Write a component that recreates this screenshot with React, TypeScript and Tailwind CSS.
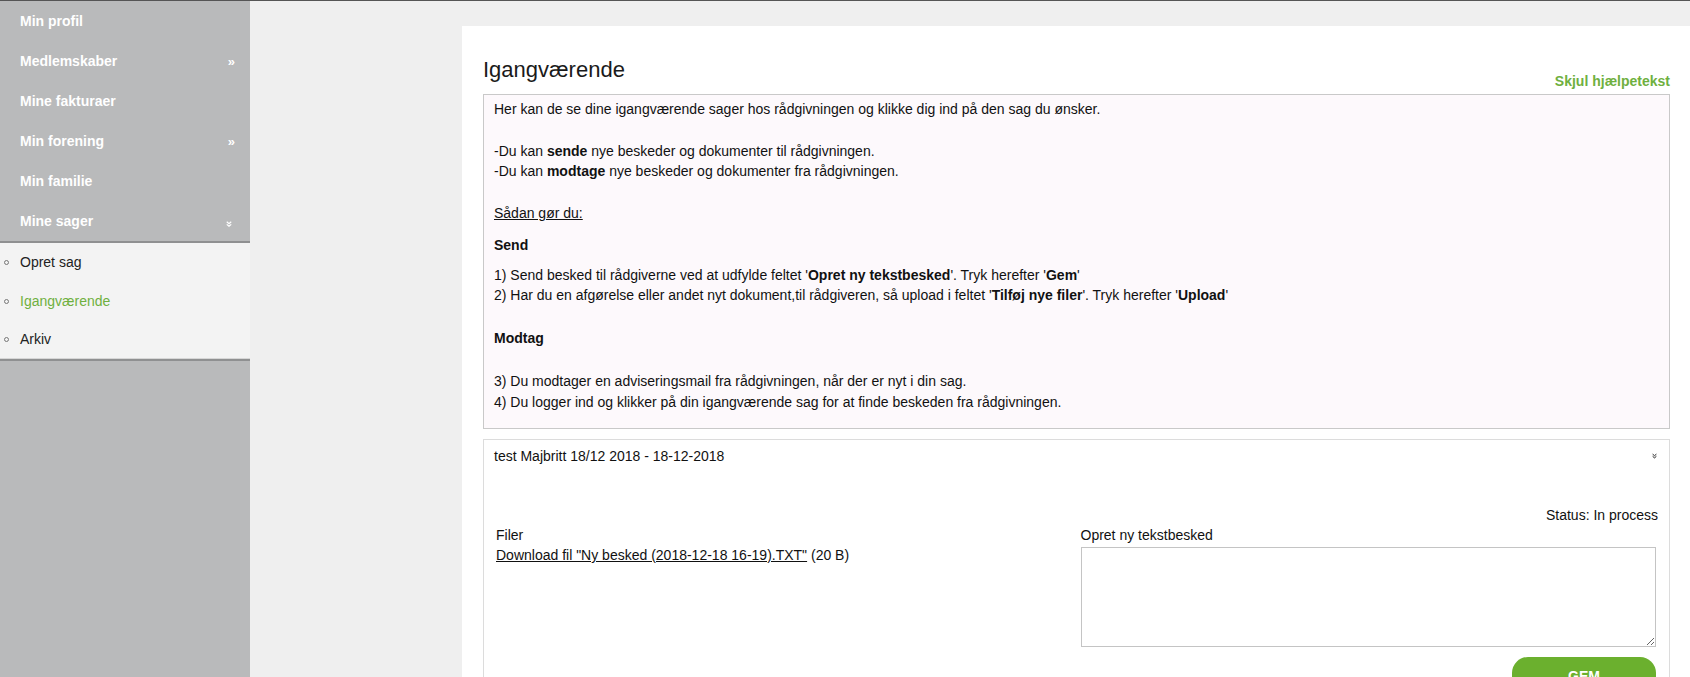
import React, { useState } from 'react';

const mainMenu = [
  { label: 'Min profil', arrow: false },
  { label: 'Medlemskaber', arrow: true },
  { label: 'Mine fakturaer', arrow: false },
  { label: 'Min forening', arrow: true },
  { label: 'Min familie', arrow: false },
];

const subMenu = [
  { label: 'Opret sag', active: false },
  { label: 'Igangværende', active: true },
  { label: 'Arkiv', active: false },
];

const DoubleDown: React.FC<{ className?: string }> = ({ className }) => (
  <svg viewBox="0 0 8 8" className={className} fill="none" stroke="currentColor" strokeWidth="1.6">
    <path d="M1 1l3 2.5L7 1" />
    <path d="M1 4.5L4 7l3-2.5" />
  </svg>
);

const Sidebar: React.FC = () => (
  <aside className="w-[250px] shrink-0 bg-[#b9babb]">
    <ul>
      {mainMenu.map((item) => (
        <li key={item.label} className="h-10 flex items-center justify-between pl-5 pr-[15px]">
          <span className="text-white font-bold text-[14px]">{item.label}</span>
          {item.arrow && <span className="text-white font-bold text-[13px] leading-none">»</span>}
        </li>
      ))}
      <li className="h-10 flex items-center justify-between pl-5 pr-[18px]">
        <span className="text-white font-bold text-[14px]">Mine sager</span>
        <DoubleDown className="w-[6px] h-[6px] text-white mt-[5px]" />
      </li>
    </ul>
    <div className="h-[2px] bg-[#8f9091]" />
    <ul className="bg-[#f3f3f3]">
      {subMenu.map((item, i) => (
        <li key={item.label} className={`flex items-center ${i === subMenu.length - 1 ? 'h-[37px]' : 'h-[39px]'}`}>
          <span className="w-[5px] h-[5px] rounded-full border border-[#777] ml-1 mr-[11px]" />
          <span className={`text-[14px] ${item.active ? 'text-[#6fb03f]' : 'text-[#222]'}`}>
            {item.label}
          </span>
        </li>
      ))}
      <li className="h-px bg-[#d6d6d6]" />
    </ul>
    <div className="h-[2px] bg-[#8f9091]" />
  </aside>
);

const HelpText: React.FC = () => (
  <div className="border border-[#c9c9c9] bg-[#fdf9fc] px-[10px] pt-[4px] pb-[16px] text-[14px] leading-5 text-[#111]">
    <p>Her kan de se dine igangværende sager hos rådgivningen og klikke dig ind på den sag du ønsker.</p>
    <p className="mt-[22px]">
      -Du kan <b>sende</b> nye beskeder og dokumenter til rådgivningen.
    </p>
    <p>
      -Du kan <b>modtage</b> nye beskeder og dokumenter fra rådgivningen.
    </p>
    <p className="mt-[22px] underline">Sådan gør du:</p>
    <p className="mt-[12px] font-bold">Send</p>
    <p className="mt-[10px]">
      1) Send besked til rådgiverne ved at udfylde feltet '<b>Opret ny tekstbesked</b>'. Tryk herefter '<b>Gem</b>'
    </p>
    <p>
      2) Har du en afgørelse eller andet nyt dokument,til rådgiveren, så upload i feltet '<b>Tilføj nye filer</b>'. Tryk herefter '<b>Upload</b>'
    </p>
    <p className="mt-[23px] font-bold">Modtag</p>
    <p className="mt-[23px]">3) Du modtager en adviseringsmail fra rådgivningen, når der er nyt i din sag.</p>
    <p className="mt-px">4) Du logger ind og klikker på din igangværende sag for at finde beskeden fra rådgivningen.</p>
  </div>
);

const CaseCard: React.FC = () => {
  const [message, setMessage] = useState('');

  return (
    <div className="mt-[10px] border border-[#dcdcdc] text-[14px] leading-5 text-[#111]">
      <div className="flex items-center justify-between pt-[6px] pl-[10px] pr-[12px]">
        <span>test Majbritt 18/12 2018 - 18-12-2018</span>
        <DoubleDown className="w-[5px] h-[6px] text-[#222]" />
      </div>
      <div className="mt-[39px] pr-[11px] text-right">Status: In process</div>
      <div className="grid grid-cols-2 gap-x-2 px-3">
        <div>
          <div>Filer</div>
          <div>
            <a href="#" className="underline">
              Download fil "Ny besked (2018-12-18 16-19).TXT"
            </a>{' '}
            (20 B)
          </div>
        </div>
        <div className="pr-px">
          <label className="block">Opret ny tekstbesked</label>
          <textarea
            value={message}
            onChange={(e) => setMessage(e.target.value)}
            className="mt-[2px] block w-full h-[100px] border border-[#c4c4c4] bg-white"
          />
          <div className="flex justify-end mt-[10px]">
            <button className="w-[144px] h-[38px] rounded-[16px] bg-[#6bb02e] text-white font-bold text-[14px]">
              GEM
            </button>
          </div>
        </div>
      </div>
    </div>
  );
};

export default function App() {
  return (
    <div
      className="flex min-h-screen border-t border-[#555] bg-[#efefef]"
      style={{ fontFamily: '"Liberation Sans", Arial, sans-serif' }}
    >
      <Sidebar />
      <main className="flex-1 pl-[212px] pt-[25px]">
        <div className="bg-white pl-[21px] pr-[20px] pt-[30px] min-h-[660px]">
          <div className="flex items-start justify-between mb-[3px]">
            <h2 className="text-[22px] leading-[28px] text-[#1a1a1a]">Igangværende</h2>
            <a href="#" className="mt-[15px] text-[14px] leading-5 font-bold text-[#6fb03f]">
              Skjul hjælpetekst
            </a>
          </div>
          <HelpText />
          <CaseCard />
        </div>
      </main>
    </div>
  );
}
